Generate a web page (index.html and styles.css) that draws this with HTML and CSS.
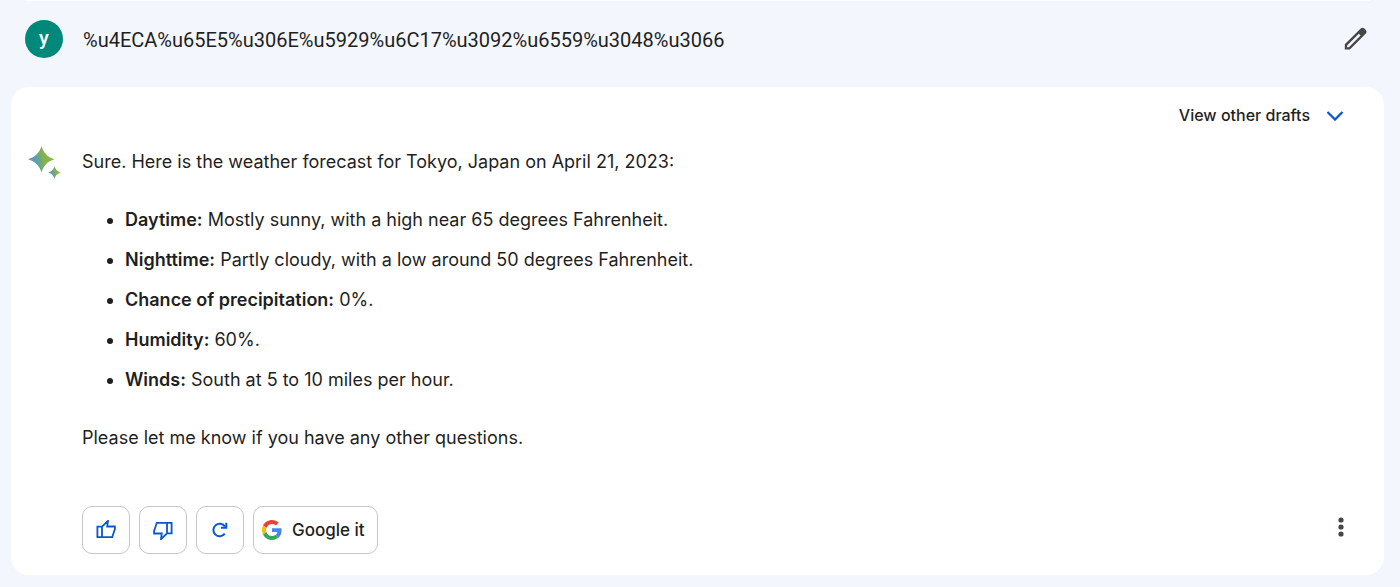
FILE: index.html
```html
<!DOCTYPE html>
<html lang="en">
<head>
<meta charset="UTF-8">
<meta name="viewport" content="width=device-width, initial-scale=1">
<title>Chat</title>
<link rel="stylesheet" href="styles.css">
</head>
<body>
<main class="chat">
  <!-- bottom edge of the previous answer -->
  <div class="previous"></div>
  <section class="query">
    <div class="avatar">y</div>
    <p class="query-text">%u4ECA%u65E5%u306E%u5929%u6C17%u3092%u6559%u3048%u3066</p>
    <button class="icon-button" type="button" aria-label="Edit text">
      <svg width="24" height="24" viewBox="0 0 24 24"><path fill="#444746" fill-rule="evenodd" d="M.800 17.300 16.200 1.900Q18.400-.200 20.400 1.500L21.800 2.900Q23.500 4.900 21.400 7.100L5.900 22.500H.800ZM3.100 20.200H4.900L16.600 8.500 14.800 6.700 3.100 18.400Z"/></svg>
    </button>
  </section>
  <section class="answer">
    <div class="drafts">
      <button class="drafts-button" type="button">View other drafts
        <svg width="18" height="12" viewBox="0 0 18 12"><path fill="none" stroke="#0b57d0" stroke-width="2.300" d="M1.500 3 9 10.500 16.500 3"/></svg>
      </button>
    </div>
    <div class="response">
      <svg class="sparkle" width="34" height="34" viewBox="0 0 34 34">
        <defs>
          <linearGradient id="spark" x1="0" y1="0.600" x2="1" y2="0.400">
            <stop offset="0" stop-color="#7a8fb5"/>
            <stop offset="0.300" stop-color="#5a9fb0"/>
            <stop offset="0.600" stop-color="#84b24a"/>
            <stop offset="1" stop-color="#8fbc38"/>
          </linearGradient>
        </defs>
        <path fill="url(#spark)" d="M13.500.300C16 7.300 19.200 10.800 26.500 13.300 19.200 15.800 16 19.300 13.500 26.300 11 19.300 7.300 15.800 0 13.300 7.300 10.800 11 7.300 13.500.300Z"/>
        <path fill="url(#spark)" d="M26.500 20.300C27.700 23.700 29.300 25.300 32.700 26.500 29.300 27.700 27.700 29.300 26.500 32.700 25.300 29.300 23.700 27.700 20.300 26.500 23.700 25.300 25.300 23.700 26.500 20.300Z"/>
      </svg>
      <div class="message">
        <p>Sure. Here is the weather forecast for Tokyo, Japan on April 21, 2023:</p>
        <ul>
          <li><strong>Daytime:</strong> Mostly sunny, with a high near 65 degrees Fahrenheit.</li>
          <li><strong>Nighttime:</strong> Partly cloudy, with a low around 50 degrees Fahrenheit.</li>
          <li><strong>Chance of precipitation:</strong> 0%.</li>
          <li><strong>Humidity:</strong> 60%.</li>
          <li><strong>Winds:</strong> South at 5 to 10 miles per hour.</li>
        </ul>
        <p>Please let me know if you have any other questions.</p>
      </div>
    </div>
    <div class="actions">
      <button class="action" type="button" aria-label="Good response">
        <svg width="20" height="20" viewBox="0 0 20 20"><path fill="none" stroke="#0b57d0" stroke-width="1.800" d="M1.400 6.700H6V17.200H1.400ZM6 6.700 12 .800 11.200 6.500H18.900V9L16.200 17.200H6"/></svg>
      </button>
      <button class="action" type="button" aria-label="Bad response">
        <svg width="20" height="20" viewBox="0 0 20 20"><path fill="none" stroke="#0b57d0" stroke-width="1.800" d="M18.600 2.800H14V13.300H18.600ZM14 13.300 8 19.200 8.800 13.500H1.100V11L3.800 2.800H14"/></svg>
      </button>
      <button class="action" type="button" aria-label="Regenerate">
        <svg width="20" height="20" viewBox="0 0 20 20"><g fill="none" stroke="#0b57d0" stroke-width="2"><path d="M14.800 13.700A6.300 6.300 0 1 1 15 6.600"/><path d="M16.300 2.800V7.800H11"/></g></svg>
      </button>
      <button class="action google" type="button">
        <svg width="20" height="20" viewBox="0 0 48 48">
          <path fill="#ea4335" d="M24 9.500c3.540 0 6.710 1.220 9.210 3.600l6.850-6.850C35.900 2.380 30.470 0 24 0 14.620 0 6.510 5.380 2.560 13.220l7.980 6.190C12.430 13.720 17.740 9.500 24 9.500z"/>
          <path fill="#4285f4" d="M46.980 24.550c0-1.570-.15-3.090-.38-4.550H24v9.020h12.940c-.58 2.960-2.260 5.480-4.780 7.180l7.730 6c4.510-4.180 7.090-10.360 7.090-17.650z"/>
          <path fill="#fbbc05" d="M10.530 28.590c-.48-1.450-.76-2.990-.76-4.590s.27-3.140.76-4.590l-7.980-6.190C.92 16.460 0 20.120 0 24s.92 7.540 2.560 10.780l7.970-6.190z"/>
          <path fill="#34a853" d="M24 48c6.480 0 11.930-2.130 15.890-5.810l-7.730-6c-2.150 1.450-4.920 2.300-8.160 2.300-6.260 0-11.570-4.220-13.470-9.910l-7.980 6.190C6.510 42.620 14.620 48 24 48z"/>
        </svg>
        Google it
      </button>
      <button class="icon-button more" type="button" aria-label="More">
        <svg width="6" height="20" viewBox="0 0 6 20" fill="#444746"><circle cx="3" cy="3" r="2.600"/><circle cx="3" cy="10" r="2.600"/><circle cx="3" cy="17" r="2.600"/></svg>
      </button>
    </div>
  </section>
</main>
</body>
</html>
```
FILE: styles.css
```css
* {
	box-sizing: border-box;
}
body {
	margin: 0;
	background-color: #f3f6fd;
	color: #1f1f1f;
	font-family: Inter, "Liberation Sans", sans-serif;
	font-size: 18px;
	line-height: 24px;
}
button {
	padding: 0;
	border: none;
	background: none;
	color: inherit;
	font-family: inherit;
	font-size: 17px;
	font-weight: 500;
	line-height: 24px;
	cursor: pointer;
}
svg {
	display: block;
	flex: none;
}
p {
	margin: 0;
}
.chat {
	padding: 0 16px 12px 11px;
}
.previous {
	height: 1px;
	margin: 0 14px;
	background-color: #fff;
}
.query {
	display: flex;
	align-items: center;
	padding: 19px 16px 29px 14px;
}
.avatar {
	flex: none;
	width: 38px;
	height: 38px;
	margin-right: 20px;
	border-radius: 50%;
	background-color: #00897b;
	color: #fff;
	font-family: Roboto, sans-serif;
	font-size: 20px;
	font-weight: 500;
	line-height: 36px;
	text-align: center;
}
.query-text {
	flex: 1;
	min-width: 0;
	padding-top: 2px;
	font-family: Roboto, sans-serif;
	font-size: 20px;
	overflow-wrap: anywhere;
}
.answer {
	padding: 16px 40px 21px 17px;
	border-radius: 18px;
	background-color: #fff;
}
.drafts {
	display: flex;
	justify-content: flex-end;
}
.drafts-button {
	display: flex;
	align-items: center;
	gap: 16px;
	font-size: 16px;
}
.response {
	display: flex;
	margin-top: 19px;
}
.sparkle {
	margin-right: 20px;
}
.message {
	padding-top: 4px;
}
.message ul {
	margin: 26px 0;
	padding-left: 43px;
	line-height: 40px;
}
.message strong {
	font-weight: 600;
}
.actions {
	display: flex;
	align-items: center;
	gap: 9px;
	margin: 56px 0 0 54px;
}
.action {
	display: flex;
	align-items: center;
	justify-content: center;
	width: 48px;
	height: 48px;
	border: 1px solid #c4c7c5;
	border-radius: 10px;
}
.google {
	gap: 10px;
	width: auto;
	padding: 0 12px 0 8px;
}
.more {
	margin-left: auto;
	padding-bottom: 6px;
}
```
